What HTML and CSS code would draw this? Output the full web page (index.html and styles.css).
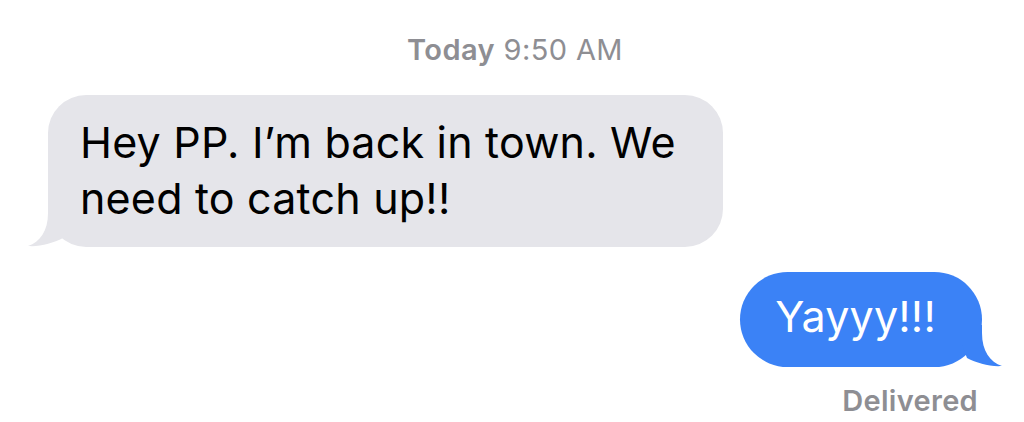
FILE: index.html
```html
<!DOCTYPE html>
<html lang="en">
<head>
    <meta charset="UTF-8">
    <meta name="viewport" content="width=device-width, initial-scale=1.0">
    <title>Messages</title>
    <link rel="stylesheet" href="styles.css">
</head>
<body>
    <div class="thread">
        <p class="timestamp"><b>Today</b> 9:50 AM</p>

        <div class="row row-in">
            <div class="bubble bubble-in">
                Hey PP. I’m back in town. We need to catch up!!
                <svg class="tail tail-in" width="40" height="42" viewBox="0 0 40 42">
                    <path d="M20 0 L20 8 C20 26 12 37 0 41 C12 42 25 38 35 33 L40 20 L40 0 Z" />
                </svg>
            </div>
        </div>

        <div class="row row-out">
            <div class="bubble bubble-out">
                Yayyy!!!
                <svg class="tail tail-out" width="40" height="42" viewBox="0 0 40 42">
                    <path d="M20 0 L20 8 C20 26 28 37 40 41 C28 42 15 38 5 33 L0 20 L0 0 Z" />
                </svg>
            </div>
        </div>
        <p class="status">Delivered</p>
    </div>
</body>
</html>
```

FILE: styles.css
```css
body {
    margin: 0;
    padding: 0;
    background-color: #fff;
    font-family: Inter, "Noto Sans", sans-serif;
}

.thread {
    display: flex;
    flex-direction: column;
    padding: 0 42px 0 48px;
}

.timestamp {
    margin: 30px 0 0;
    text-align: center;
    font-size: 29px;
    line-height: 40px;
    letter-spacing: 0.4px;
    color: #8e8e93;
}

.timestamp b {
    font-weight: 600;
}

.row {
    display: flex;
}

.row-in {
    margin-top: 25px;
}

.row-out {
    justify-content: flex-end;
    margin-top: 25px;
}

.bubble {
    position: relative;
    font-size: 43px;
    line-height: 56px;
    letter-spacing: 0.2px;
}

.bubble-in {
    width: 611px;
    padding: 19px 32px 21px 32px;
    background-color: #e5e5ea;
    color: #000;
    border-radius: 38px;
}

.bubble-out {
    padding: 16px 46px 23px 35px;
    background-color: #3b82f6;
    color: #fff;
    border-radius: 48px;
}

.tail {
    position: absolute;
    bottom: 0;
}

.tail-in {
    left: -20px;
    fill: #e5e5ea;
}

.tail-out {
    right: -20px;
    fill: #3b82f6;
}

.status {
    margin: 14px 4px 0 0;
    text-align: right;
    font-size: 29px;
    line-height: 40px;
    letter-spacing: 0.3px;
    font-weight: 600;
    color: #8e8e93;
}
```
